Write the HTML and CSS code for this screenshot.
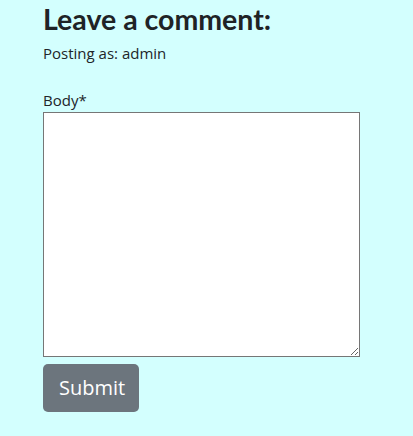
FILE: index.html
```html
<!DOCTYPE html>
<html>
<head>
<meta charset="utf-8">
<link rel="stylesheet" href="styles.css">
</head>
<body>
<div class="wrap">
  <h3 class="title">Leave a comment:</h3>
  <p class="posting">Posting as: admin</p>
  <form class="form">
    <label class="label" for="body">Body*</label>
    <textarea id="body" class="textarea"></textarea>
    <button type="button" class="btn">Submit</button>
  </form>
</div>
</body>
</html>
```
FILE: styles.css
```css
html, body {
  margin: 0;
  padding: 0;
  background: #d3fffe;
}
body {
  font-family: "Open Sans", "Noto Sans", sans-serif;
  color: #212529;
  font-size: 16px;
  line-height: 1.5;
}
.wrap {
  padding: 0 0 0 43px;
}
.title {
  margin: 0 0 6px;
  padding-top: 2px;
  font-family: "Lato", "Open Sans", sans-serif;
  font-size: 28.5px;
  font-weight: 700;
  line-height: 1.2;
  color: #1f2326;
}
.posting {
  margin: 0 0 23px;
  font-size: 15px;
}
.form {
  display: flex;
  flex-direction: column;
  align-items: flex-start;
}
.label {
  font-size: 15px;
  line-height: 24px;
}
.textarea {
  box-sizing: border-box;
  width: 317px;
  height: 245px;
  margin: 0;
  border: 1px solid #767676;
  background: #fff;
  padding: 2px;
}
.btn {
  margin-top: 7px;
  height: 48px;
  padding: 0 16px;
  width: 96px;
  border: none;
  border-radius: 5px;
  background: #6c757d;
  color: #fff;
  font-family: inherit;
  font-size: 20px;
}
```
